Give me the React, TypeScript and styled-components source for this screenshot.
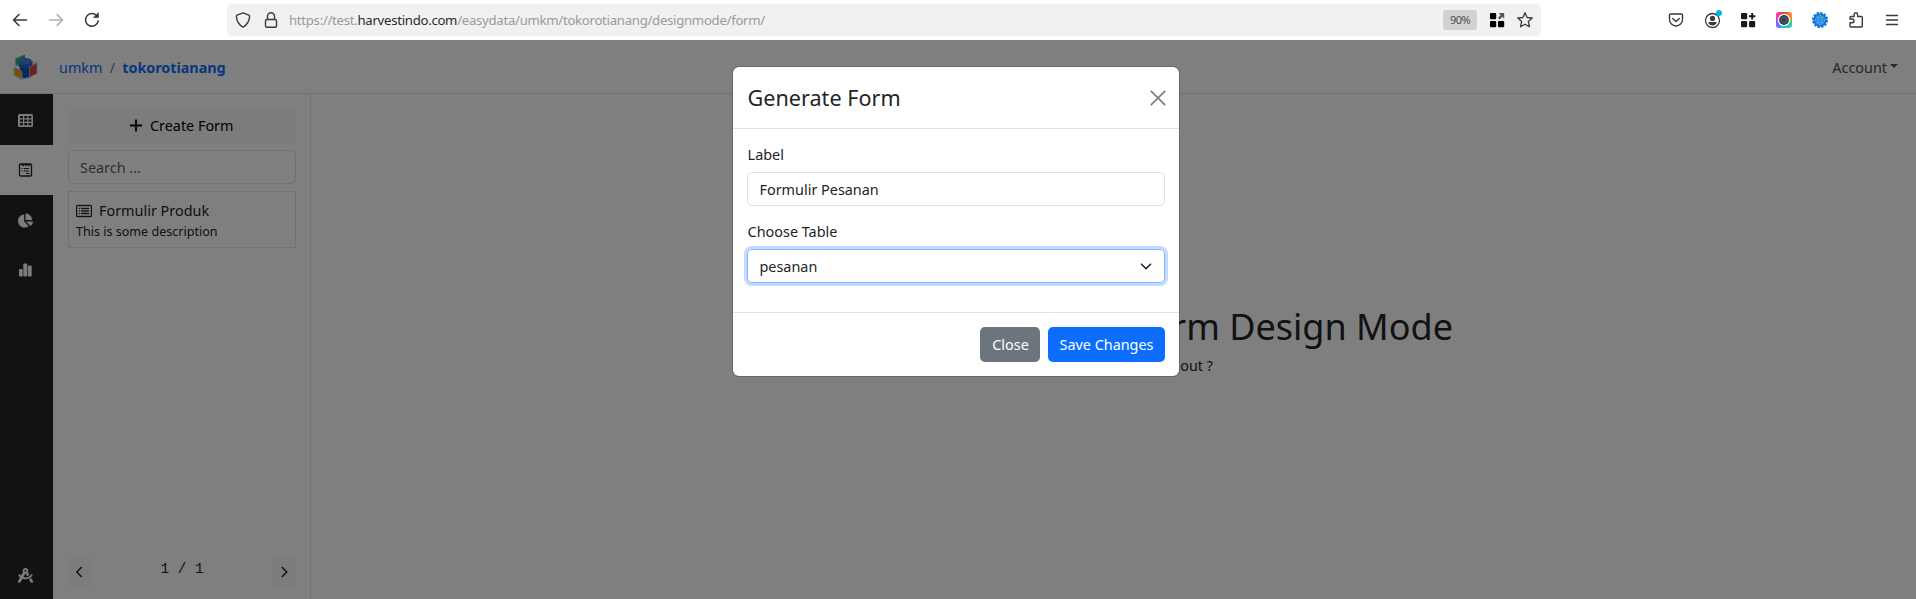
import React from 'react';
import styled, { createGlobalStyle } from 'styled-components';
import { BsCardList } from 'react-icons/bs';
import { FaChartPie, FaDraftingCompass } from 'react-icons/fa';

const GlobalStyle = createGlobalStyle`
  * { box-sizing: border-box; }
  body {
    margin: 0;
    background: #fff;
    color: #212529;
    font-family: "Noto Sans", "Liberation Sans", sans-serif;
    font-size: 14.4px;
    line-height: 1.5;
    overflow: hidden;
  }
  svg { display: block; flex: none; }
  button, input { font: inherit; color: inherit; }
`;

const Window = styled.div`
  display: flex;
  flex-direction: column;
  height: 599px;
`;

/* Browser toolbar */
const Toolbar = styled.header`
  display: flex;
  align-items: center;
  height: 40px;
  padding: 0 6px 0 2px;
  background: #fff;
  color: #3a3a3f;
`;
const ToolSlot = styled.div<{ $faded?: boolean }>`
  display: flex;
  align-items: center;
  justify-content: center;
  width: 36px;
  height: 36px;
  opacity: ${p => (p.$faded ? 0.4 : 1)};
`;
const AddressBar = styled.div`
  display: flex;
  align-items: center;
  width: 1314px;
  height: 32px;
  margin: 0 117px;
  margin-right: auto;
  padding: 0 2px;
  border-radius: 4px;
  background: #f1f1f1;
`;
const AddressSlot = styled.div`
  display: flex;
  justify-content: center;
  width: 28px;
`;
const Url = styled.div`
  flex: 1;
  padding-left: 4px;
  color: #9a9a9d;
  font-size: 13.2px;
  line-height: 20px;
  white-space: nowrap;
  letter-spacing: -0.29px;
`;
const Domain = styled.span`
  color: #2a2a2e;
`;
const Zoom = styled.div`
  width: 34px;
  height: 20px;
  margin-right: 6px;
  border-radius: 3px;
  background: #d2d2d3;
  color: #4b4b50;
  font-size: 11px;
  letter-spacing: -0.5px;
  line-height: 20px;
  text-align: center;
`;

/* Web page */
const Page = styled.div`
  position: relative;
  display: flex;
  flex-direction: column;
  flex: 1;
  min-height: 0;
`;
const Navbar = styled.nav`
  display: flex;
  align-items: center;
  height: 54px;
  padding: 2px 18px 0 13px;
  border-bottom: 1px solid #dee2e6;
`;
const Crumbs = styled.div`
  display: flex;
  gap: 7.2px;
  margin-left: 21px;
  color: #6c757d;
`;
const Crumb = styled.a<{ $bold?: boolean }>`
  color: #0d6efd;
  font-weight: ${p => (p.$bold ? 700 : 400)};
  letter-spacing: ${p => (p.$bold ? '-0.04px' : 'normal')};
`;
const Account = styled.div`
  display: flex;
  align-items: center;
  gap: 3px;
  margin-left: auto;
  color: #4d5154;
`;
const Caret = styled.span`
  margin-top: -2px;
  border: 4px solid transparent;
  border-top-color: currentColor;
  border-bottom: 0;
`;
const Body = styled.div`
  display: flex;
  flex: 1;
  min-height: 0;
`;
const Rail = styled.aside`
  display: flex;
  flex-direction: column;
  width: 53px;
  padding-top: 1px;
  background: #212529;
`;
const RailItem = styled.div<{ $active?: boolean; $last?: boolean }>`
  display: flex;
  align-items: center;
  height: ${p => (p.$last ? 48 : 50)}px;
  padding-left: 17.5px;
  margin-top: ${p => (p.$last ? 'auto' : 0)};
  background: ${p => (p.$active ? '#fff' : 'transparent')};
  color: ${p => (p.$active ? '#212529' : '#f8f9fa')};
`;
const Panel = styled.section`
  display: flex;
  flex-direction: column;
  width: 258px;
  padding: 15px 14px 13px 15px;
  border-right: 1px solid #dee2e6;
`;
const CreateButton = styled.button`
  display: flex;
  align-items: center;
  justify-content: center;
  gap: 7.5px;
  height: 34px;
  padding: 0;
  border: 0;
  border-radius: 5px;
  background: #f8f9fa;
  color: #000;
`;
const Search = styled.input`
  height: 34px;
  margin: 7px 0;
  padding: 0 11px;
  border: 1px solid #dee2e6;
  border-radius: 5px;
  background: #fff;
  &::placeholder { color: rgba(33, 37, 41, 0.75); opacity: 1; }
`;
const FormCard = styled.article`
  height: 57px;
  padding: 8px 7px;
  border: 1px solid #dee2e6;
`;
const CardTitle = styled.div`
  display: flex;
  align-items: center;
  gap: 7px;
  height: 22px;
`;
const CardText = styled.div`
  font-size: 12.55px;
  line-height: 19px;
`;
const Pager = styled.div`
  display: flex;
  justify-content: space-between;
  height: 28px;
  margin-top: auto;
`;
const PageButton = styled.button`
  display: flex;
  align-items: center;
  justify-content: center;
  width: 24px;
  height: 28px;
  padding: 0;
  border: 0;
  border-radius: 3px;
  background: #f8f9fa;
`;
const PageCount = styled.span`
  font-family: "Liberation Mono", monospace;
  line-height: 23px;
`;
const Main = styled.main`
  flex: 1;
  display: flex;
  flex-direction: column;
  justify-content: center;
  align-items: flex-start;
  padding: 0 0 12px 462px;
`;
const Headline = styled.h1`
  width: 680px;
  margin: 0 0 7px;
  font-size: 36px;
  font-weight: 400;
  line-height: 43px;
  text-align: right;
  white-space: nowrap;
`;
const Tagline = styled.p`
  width: 200px;
  margin: 0 0 0 240px;
  text-align: right;
  white-space: nowrap;
`;

/* Modal dialog over the page */
const Backdrop = styled.div`
  position: absolute;
  inset: 0;
  display: flex;
  justify-content: center;
  align-items: flex-start;
  padding: 26px 4px 0 0;
  background: rgba(0, 0, 0, 0.5);
`;
const Dialog = styled.div`
  width: 448px;
  border: 1px solid rgba(0, 0, 0, 0.175);
  border-radius: 7px;
  background: #fff;
  background-clip: padding-box;
`;
const DialogHeader = styled.div`
  display: flex;
  align-items: center;
  justify-content: space-between;
  height: 62px;
  padding: 0 13px 0 14.6px;
  border-bottom: 1px solid #dee2e6;
`;
const DialogTitle = styled.h4`
  margin: 0;
  font-size: 21.6px;
  font-weight: 400;
  line-height: 32px;
`;
const DialogBody = styled.div`
  height: 183px;
  padding: 14px;
`;
const Label = styled.label`
  display: block;
  height: 29px;
  padding-left: 0.6px;
  line-height: 23px;
`;
const Field = styled.div<{ $focus?: boolean }>`
  display: flex;
  align-items: center;
  justify-content: space-between;
  height: 34px;
  margin-bottom: 14px;
  padding: 2px 12px 0 11.5px;
  border: 1px solid ${p => (p.$focus ? '#86b7fe' : '#dee2e6')};
  border-radius: 5px;
  box-shadow: ${p => (p.$focus ? '0 0 0 3px rgba(13, 110, 253, 0.25)' : 'none')};
`;
const DialogFooter = styled.div`
  display: flex;
  align-items: center;
  justify-content: flex-end;
  gap: 8px;
  height: 64px;
  padding: 0 14px;
  border-top: 1px solid #dee2e6;
`;
const Button = styled.button<{ $primary?: boolean }>`
  width: ${p => (p.$primary ? 117 : 60)}px;
  height: 35px;
  padding: 0 0 0 ${p => (p.$primary ? 0 : 1)}px;
  border: 0;
  border-radius: 5px;
  background: ${p => (p.$primary ? '#0d6efd' : '#6c757d')};
  color: #fff;
`;

const line = {
  fill: 'none',
  stroke: 'currentColor',
  strokeWidth: 1.4,
  strokeLinecap: 'round' as const,
  strokeLinejoin: 'round' as const,
};

const BackIcon = ({ flip }: { flip?: boolean }) => (
  <svg width="16" height="16" viewBox="0 0 16 16" {...line} strokeWidth="1.6">
    {flip ? <path d="M1.5 8h13M9 2.5 14.5 8 9 13.5" /> : <path d="M14.5 8h-13M7 2.5 1.5 8 7 13.5" />}
  </svg>
);
const ReloadIcon = () => (
  <svg width="16" height="16" viewBox="0 0 16 16" {...line} strokeWidth="1.5">
    <path d="M14.2 9A6.4 6.4 0 1 1 12.4 3.3" />
    <path d="M14.4 1v4.6H9.8z" fill="currentColor" strokeWidth="0.7" />
  </svg>
);
const ShieldIcon = () => (
  <svg width="16" height="16" viewBox="0 0 16 16" {...line}>
    <path d="M8 .9 13.9 3.2c.6.2.8.5.7 1.2-.3 5-2.2 8.400-6.600 10.700C3.600 12.800 1.700 9.400 1.400 4.400c-.1-.7.1-1 .7-1.200z" />
  </svg>
);
const LockIcon = () => (
  <svg width="16" height="16" viewBox="0 0 16 16" {...line}>
    <path d="M4.500 7.500V4.200a3.500 3.500 0 0 1 7 0v3.300" />
    <rect x="2.500" y="7.500" width="11" height="7.700" rx="1.500" />
  </svg>
);
const TilesIcon = ({ plus }: { plus?: boolean }) => (
  <svg width="16" height="16" viewBox="0 0 16 16" fill={plus ? '#19191c' : '#000'}>
    <rect x="1" y="1" width="6.200" height="6.200" rx="1" />
    <rect x="1" y="9" width="6.200" height="6.200" rx="1" />
    <rect x="9" y="9" width="6.200" height="6.200" rx="1" />
    {plus ? (
      <path d="M11.200 1h2v2.200h2.200v2h-2.200v2.200h-2V5.200H9v-2h2.200z" />
    ) : (
      <path d="M9.500 1h5.700v5.700l-1.900-1.900L10.700 7.400 9 5.700l2.600-2.700z" fill="#555" />
    )}
  </svg>
);
const StarIcon = () => (
  <svg width="16" height="16" viewBox="0 0 16 16" {...line} strokeWidth="1.3">
    <path d="m8 .8 2.100 4.700 5.100.5-3.900 3.500 1.200 5.300L8 12.200l-4.500 2.600 1.200-5.300L.8 6l5.100-.5z" />
  </svg>
);
const PocketIcon = () => (
  <svg width="16" height="16" viewBox="0 0 16 16" {...line}>
    <path d="M2.500 2h11c.6 0 1 .4 1 1v4.500a6.500 6.500 0 0 1-13 0V3c0-.6.4-1 1-1zM4.700 6.500 8 9.500l3.300-3" />
  </svg>
);
const ProfileIcon = () => (
  <svg width="20" height="22" viewBox="0 0 20 22">
    <circle cx="10.500" cy="11.500" r="7" fill="none" stroke="currentColor" strokeWidth="1.3" />
    <circle cx="10.500" cy="9.400" r="2.600" fill="currentColor" />
    <path d="M6.300 13h8.400c0 2.100-2 3.400-4.200 3.400S6.300 15.100 6.300 13z" fill="currentColor" />
    <circle cx="17" cy="4" r="3" fill="#00b3f4" />
  </svg>
);
const PickerIcon = () => (
  <svg width="16" height="16" viewBox="0 0 16 16">
    <defs>
      <linearGradient id="top" x2="1">
        <stop offset="0" stopColor="#f23ca8" />
        <stop offset=".5" stopColor="#f33b35" />
        <stop offset="1" stopColor="#ff9a1f" />
      </linearGradient>
      <linearGradient id="bottom" x2="1">
        <stop offset="0" stopColor="#8c59ff" />
        <stop offset=".5" stopColor="#27b9ee" />
        <stop offset="1" stopColor="#2fd67b" />
      </linearGradient>
    </defs>
    <path d="M0 8V3a3 3 0 0 1 3-3h10a3 3 0 0 1 3 3v5z" fill="url(#top)" />
    <path d="M0 8v5a3 3 0 0 0 3 3h10a3 3 0 0 0 3-3V8z" fill="url(#bottom)" />
    <circle cx="8" cy="8" r="6.200" fill="#fff" />
    <circle cx="8" cy="8" r="4.900" fill="#30404f" />
    <circle cx="8" cy="8" r="2.800" fill="none" stroke="#61727d" strokeWidth="0.7" />
  </svg>
);
const GlobeIcon = () => (
  <svg width="16" height="16" viewBox="0 0 16 16">
    <circle cx="8" cy="8" r="6.600" fill="#0875d7" />
    <circle cx="8" cy="8" r="6.900" fill="none" stroke="#0875d7" strokeWidth="2.200" strokeDasharray="2.400 1.213" />
    <g fill="none" stroke="#65adeb" strokeWidth="0.8">
      <circle cx="8" cy="8" r="4.500" />
      <ellipse cx="8" cy="8" rx="2" ry="4.500" />
      <path d="M3.500 8h9M4.200 5.700h7.600M4.200 10.300h7.600" />
    </g>
    <circle cx="9" cy="6.200" r=".9" fill="#38c976" />
  </svg>
);
const PuzzleIcon = () => (
  <svg width="16" height="16" viewBox="0 0 16 16" {...line}>
    <path d="M2 7V5.500c0-.7.4-1 1-1h3.200V2.500a1.700 1.700 0 0 1 3.400 0v2h3.600c.7 0 1.100.4 1.100 1V14c0 .7-.4 1-1 1H3c-.6 0-1-.3-1-1v-3.300h2.200a1.850 1.850 0 0 0 0-3.700z" />
  </svg>
);
const MenuIcon = () => (
  <svg width="16" height="16" viewBox="0 0 16 16" {...line}>
    <path d="M2.500 3.500h11M2.500 8h11M2.500 12.500h11" />
  </svg>
);
const LogoIcon = () => (
  <svg width="25" height="28" viewBox="0 0 25 28">
    <path d="m2.500 4.500 9.500-4v6L7 8.500v4.500l-4.500-2z" fill="#16b982" />
    <path d="M14 5.500 23.500 9 19 12" fill="none" stroke="#9dbbe0" strokeWidth=".8" />
    <path d="M6.500 8h13v13c-2.500 4-9 4.500-12.500 1z" fill="#0755bd" />
    <ellipse cx="12.500" cy="7.500" rx="6.500" ry="3.400" fill="#4a80d8" />
    <path d="M6 8v4c2.500 3 10.500 3 13 0V8c-2.500 3.300-10.500 3.300-13 0z" fill="#2467cc" />
    <path d="M8 17.500c3 1.500 6 1.500 9 0M8 21c3 1.500 6 1.500 9 0" fill="none" stroke="#0a3f98" strokeWidth="1" />
    <path d="m16.500 13 7.500-4v10.500l-7.500 3.500z" fill="#dd3e37" />
    <path d="m1 13 8 4.500v8L1 21z" fill="#e8a31b" />
    <path d="m1 13 8 4.500v8L1 21zm15.500 0v10l7.500-3.500V9zM9 25.500l7.500-3M2.500 11V4.500l9.500-4M2 12.500l5-3" fill="none" stroke="#adc6e6" strokeWidth=".8" />
  </svg>
);
const TableIcon = () => (
  <svg width="15" height="13" viewBox="0 0 15 13">
    <rect width="15" height="13" rx="1.500" fill="currentColor" />
    <path d="M2 2h3v2.300H2zm4.200 0h3v2.300h-3zm4.200 0h3v2.300h-3zM2 5.500h3v2.300H2zm4.200 0h3v2.300h-3zm4.200 0h3v2.300h-3zM2 9h3v2.300H2zm4.200 0h3v2.300h-3zm4.200 0h3v2.300h-3z" fill="#212529" />
  </svg>
);
const FormIcon = () => (
  <svg width="15" height="14" viewBox="0 0 15 14" fill="none" stroke="currentColor">
    <rect x="1.500" y="1" width="12" height="12" rx="1" strokeWidth="1.3" />
    <path d="M3.500 1.200 5 2.700l1.500-1.500L8 2.700l1.500-1.500L11 2.700l1.500-1.500M3.500 5.500h1m1.200 0H11M3.500 8h1m1.200 0H11M8 10.500h3.500" strokeWidth="1.2" />
  </svg>
);
const BarsIcon = () => (
  <svg width="15" height="14" viewBox="0 0 15 14" fill="currentColor">
    <rect x="1" y="6" width="3.700" height="7.500" rx="1" />
    <rect x="5.300" y="0.500" width="3.900" height="13" rx="1" />
    <rect x="9.800" y="2.500" width="3.900" height="11" rx="1" />
  </svg>
);
const PlusIcon = () => (
  <svg width="12" height="14" viewBox="0 0 12 14" stroke="currentColor" strokeWidth="1.8">
    <path d="M0 6.500h12M6 .5v12" />
  </svg>
);
const ChevronIcon = ({ d }: { d: string }) => (
  <svg width="12" height="12" viewBox="0 0 12 12" {...line} strokeWidth="1.6">
    <path d={d} />
  </svg>
);
const CloseIcon = () => (
  <svg width="16" height="16" viewBox="0 0 16 16" {...line} strokeWidth="1.8">
    <path d="m1.300 1.300 13.400 13.400M14.700 1.300 1.300 14.700" stroke="#808080" />
  </svg>
);

export default function App() {
  return (
    <Window>
      <GlobalStyle />
      <Toolbar>
        <ToolSlot><BackIcon /></ToolSlot>
        <ToolSlot $faded><BackIcon flip /></ToolSlot>
        <ToolSlot><ReloadIcon /></ToolSlot>
        <AddressBar>
          <AddressSlot><ShieldIcon /></AddressSlot>
          <AddressSlot><LockIcon /></AddressSlot>
          <Url>https://test.<Domain>harvestindo.com</Domain>/easydata/umkm/tokorotianang/designmode/form/</Url>
          <Zoom>90%</Zoom>
          <AddressSlot><TilesIcon /></AddressSlot>
          <AddressSlot><StarIcon /></AddressSlot>
        </AddressBar>
        <ToolSlot><PocketIcon /></ToolSlot>
        <ToolSlot><ProfileIcon /></ToolSlot>
        <ToolSlot><TilesIcon plus /></ToolSlot>
        <ToolSlot><PickerIcon /></ToolSlot>
        <ToolSlot><GlobeIcon /></ToolSlot>
        <ToolSlot><PuzzleIcon /></ToolSlot>
        <ToolSlot><MenuIcon /></ToolSlot>
      </Toolbar>
      <Page>
        <Navbar>
          <LogoIcon />
          <Crumbs>
            <Crumb>umkm</Crumb>
            <span>/</span>
            <Crumb $bold>tokorotianang</Crumb>
          </Crumbs>
          <Account>Account<Caret /></Account>
        </Navbar>
        <Body>
          <Rail>
            <RailItem><TableIcon /></RailItem>
            <RailItem $active><FormIcon /></RailItem>
            <RailItem><FaChartPie size={15} /></RailItem>
            <RailItem><BarsIcon /></RailItem>
            <RailItem $last><FaDraftingCompass size={15} /></RailItem>
          </Rail>
          <Panel>
            <CreateButton><PlusIcon />Create Form</CreateButton>
            <Search placeholder="Search ..." />
            <FormCard>
              <CardTitle><BsCardList size={16} strokeWidth={0.4} />Formulir Produk</CardTitle>
              <CardText>This is some description</CardText>
            </FormCard>
            <Pager>
              <PageButton><ChevronIcon d="M7.300 1.500 2.800 6l4.500 4.500" /></PageButton>
              <PageCount>1 / 1</PageCount>
              <PageButton><ChevronIcon d="M4.300 1.500 8.800 6l-4.500 4.500" /></PageButton>
            </Pager>
          </Panel>
          <Main>
            <Headline>Form Design Mode</Headline>
            <Tagline>out ?</Tagline>
          </Main>
        </Body>
        <Backdrop>
          <Dialog>
            <DialogHeader>
              <DialogTitle>Generate Form</DialogTitle>
              <CloseIcon />
            </DialogHeader>
            <DialogBody>
              <Label>Label</Label>
              <Field>Formulir Pesanan</Field>
              <Label>Choose Table</Label>
              <Field $focus>
                pesanan
                <ChevronIcon d="M1.500 3.200 6 7.700l4.500-4.500" />
              </Field>
            </DialogBody>
            <DialogFooter>
              <Button>Close</Button>
              <Button $primary>Save Changes</Button>
            </DialogFooter>
          </Dialog>
        </Backdrop>
      </Page>
    </Window>
  );
}
